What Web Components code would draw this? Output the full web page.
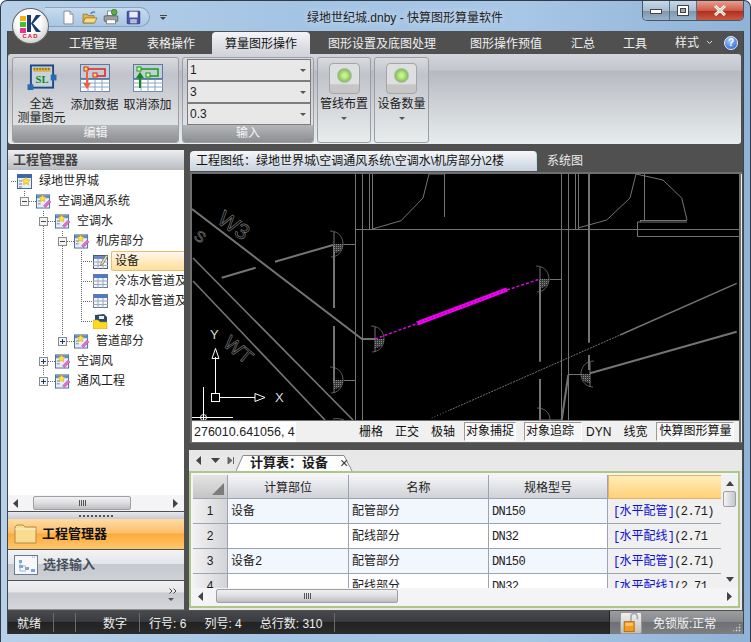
<!DOCTYPE html>
<html lang="zh">
<head>
<meta charset="utf-8">
<title>快算图形算量软件</title>
<style>
  html, body { margin: 0; padding: 0; overflow: hidden; }
  body { font: 12px "Liberation Sans", "Noto Sans CJK SC", sans-serif; color: #1c1c1c; }
</style>
</head>
<body>
<app-window></app-window>
<script>
// small svg icons, all in one place
const icons = {
  doc: `<svg width="13" height="15" viewBox="0 0 17 20"><path d="M2.500 1.500h8l4 4v13h-12z" fill="#fdfdfd" stroke="#777"/><path d="M10.500 1.500v4h4" fill="#dfe6f0" stroke="#777"/></svg>`,
  open: `<svg width="16" height="15" viewBox="0 0 22 20"><path d="M1.500 17.500v-12h6l1 2h8v10z" fill="#e2b64f" stroke="#8a6a20"/><path d="M1.500 17.500l3-7h16l-3 7z" fill="#f8dc84" stroke="#8a6a20"/><path d="M12 5c2-3 4-3 6-2" fill="none" stroke="#5a7fa8" stroke-width="2"/></svg>`,
  print: `<svg width="16" height="16" viewBox="0 0 20 20"><rect x="5.500" y="2.500" width="9" height="6" fill="#fff" stroke="#777"/><rect x="1.500" y="8.500" width="17" height="7" rx="1" fill="#9a9fa8" stroke="#555"/><rect x="4.500" y="13.500" width="11" height="5" fill="#fff" stroke="#777"/><circle cx="14" cy="4" r="3.500" fill="#5cb040" stroke="#2c7a1c"/></svg>`,
  save: `<svg width="15" height="15" viewBox="0 0 18 18"><rect x="1.500" y="1.500" width="15" height="15" rx="1" fill="#4a55b8" stroke="#2a3070"/><rect x="4" y="2" width="10" height="7" fill="#e8ecf4"/><rect x="5" y="11" width="8" height="5" fill="#b8bcd0"/></svg>`,
  measure: `<svg width="30" height="28" viewBox="0 0 30 28"><rect x="3.500" y="1.500" width="23" height="23" fill="#c8d2da" stroke="#1c4a86" stroke-width="2"/><rect x="6" y="4" width="18" height="4" fill="#d8b040"/><path d="M7 4v2M10 4v2M13 4v2M16 4v2M19 4v2M22 4v2" stroke="#6a4a10"/><text x="15" y="20" text-anchor="middle" font-family="Liberation Serif" font-weight="700" font-size="11" fill="#0a8a20">SL</text><rect x="0" y="21" width="6" height="6" fill="#2a6ab0"/><rect x="24" y="11" width="6" height="6" fill="#2a6ab0"/></svg>`,
  addData: `<svg width="30" height="28" viewBox="0 0 30 28"><rect x=".5" y=".5" width="29" height="14" fill="#c4ced8" stroke="#5a7aa0"/><path d="M6 5h19v7h-9" fill="none" stroke="#e02020" stroke-width="1.500"/><rect x="4" y="3" width="4" height="4" fill="#ffe060" stroke="#e02020"/><rect x="13" y="9" width="4" height="4" fill="#ffe060" stroke="#e02020"/><rect x=".5" y="15.500" width="29" height="12" fill="#fff" stroke="#6a8ab0"/><path d="M0 19h30M0 23h30M8 16v12M15 16v12M22 16v12" stroke="#8aa4c4"/><path d="M7 8v12" stroke="#f06040" stroke-width="2"/><path d="M3 19h8l-4 6z" fill="#f06040"/></svg>`,
  cancelData: `<svg width="30" height="28" viewBox="0 0 30 28"><rect x=".5" y=".5" width="29" height="14" fill="#c4ced8" stroke="#5a7aa0"/><path d="M6 5h19v7h-9" fill="none" stroke="#10a010" stroke-width="1.500"/><rect x="4" y="3" width="4" height="4" fill="#e8ffb0" stroke="#10a010"/><rect x="13" y="9" width="4" height="4" fill="#e8ffb0" stroke="#10a010"/><rect x=".5" y="15.500" width="29" height="12" fill="#fff" stroke="#6a8ab0"/><path d="M0 19h30M0 23h30M8 16v12M15 16v12M22 16v12" stroke="#8aa4c4"/><path d="M7 12v12" stroke="#108a10" stroke-width="2"/><path d="M3 14h8l-4-6z" fill="#108a10"/></svg>`,
  node: `<svg width="15" height="16" viewBox="0 0 16 16"><rect x=".5" y="1.500" width="14" height="14" fill="#e8eef6" stroke="#4a6a94"/><rect x="1" y="2" width="13" height="3" fill="#5a8ad0"/><path d="M2 8h3M2 11h3" stroke="#6a7a90"/><path d="M7 1l1.200 2.500 2.800.4-2 2 .5 2.800L7 7.400 4.500 8.700 5 5.900l-2-2 2.800-.4z" fill="#ffe040" stroke="#c09a10" stroke-width=".5"/><path d="M8 13l6-6 2 2-6 6z" fill="#e070d0" stroke="#a040a0" stroke-width=".5"/></svg>`,
  root: `<svg width="15" height="15" viewBox="0 0 15 15"><rect x=".5" y=".5" width="14" height="14" fill="#e8eef6" stroke="#4a6a94"/><rect x="1" y="1" width="13" height="3" fill="#3a66b0"/><path d="M2 7h3M2 10h3M2 13h3" stroke="#6a7a90"/><path d="M9 3l1.200 2.500 2.800.4-2 2 .5 2.800L9 9.400 6.500 10.700 7 7.900l-2-2 2.800-.4z" fill="#ffe040" stroke="#c09a10" stroke-width=".5"/></svg>`,
  table: `<svg width="15" height="14" viewBox="0 0 15 14"><rect x=".5" y=".5" width="14" height="13" fill="#f4f6fa" stroke="#6a7a94"/><rect x="1" y="1" width="13" height="3" fill="#4a7ac8"/><path d="M0 7h15M0 10.500h15M5 4v10M10 4v10" stroke="#9aa8bc"/></svg>`,
  tableEdit: `<svg width="15" height="15" viewBox="0 0 15 15"><rect x=".5" y="1.500" width="14" height="13" fill="#f4f6fa" stroke="#4a5a74"/><rect x="1" y="2" width="13" height="3" fill="#6a8ac8"/><path d="M0 8h15M0 11.500h15M5 5v10M10 5v10" stroke="#9aa8bc"/><path d="M8 9l5-8 2 1-5 8-2.500 1.500z" fill="#f4e8a0" stroke="#555" stroke-width=".6"/></svg>`,
  floor: `<svg width="15" height="15" viewBox="0 0 15 15"><path d="M2 1l9-1 3 3v8H2z" fill="#2c4a6a"/><rect x="6" y="2" width="5" height="3" fill="#e8eef4"/><path d="M0 6h5l2 2h7v7H0z" fill="#ffd820" stroke="#b89a10" stroke-width=".5"/></svg>`,
  folder: `<svg width="23" height="20" viewBox="0 0 23 20"><path d="M1 19V3l2-2h6l2 2h11v16z" fill="#f8dc90" stroke="#b08c48"/><path d="M1 5h21" stroke="#fff0c0"/></svg>`,
  pick: `<svg width="24" height="20" viewBox="0 0 24 20"><rect x=".5" y=".5" width="23" height="19" fill="#f6f8fb" stroke="#6a7a90"/><path d="M18 2h4" stroke="#8a96a8" stroke-dasharray="1 1"/><rect x="5" y="5" width="3" height="3" fill="#7aa6d8"/><rect x="5" y="10" width="4" height="3" fill="#7aa6d8"/><rect x="11" y="12" width="4" height="3" fill="#7aa6d8"/><rect x="17" y="14" width="4" height="3" fill="#7aa6d8"/><path d="M6 8v8h6M9 11h3" stroke="#a0b4cc" fill="none"/></svg>`,
  lock: `<svg width="16" height="20" viewBox="0 0 16 22"><path d="M8 9V4a3.500 3.500 0 0 1 7 0v3" fill="none" stroke="#a8adb4" stroke-width="2"/><rect x=".5" y="9.500" width="11" height="11" fill="#f59a20" stroke="#b06a10"/><rect x="2" y="11" width="8" height="3" fill="#ffc870"/></svg>`
};
const arrow = d => `<svg width="7" height="9" viewBox="0 0 7 9"><path d="${d}" fill="#444"/></svg>`;

// base: fills an open shadow root from a static html string
class Part extends HTMLElement {
  constructor() {
    super();
    this.attachShadow({ mode: 'open' });
  }
  connectedCallback() {
    this.shadowRoot.innerHTML = this.markup();
  }
  attr(name, dflt = '') {
    return this.hasAttribute(name) ? this.getAttribute(name) : dflt;
  }
}

class TitleBar extends Part {
  markup() {
    return `<style>
      :host { display: flex; align-items: flex-start; height: 30px; flex: none; position: relative; color: #222; }
      #logo { position: absolute; left: 11px; top: 7px; width: 37px; height: 36px; border-radius: 50%; z-index: 3; box-sizing: border-box;
        border: 1px solid #666; background: radial-gradient(circle at 45% 35%, #fff 40%, #c8c8c8 85%, #8a8a8a); }
      #logo i { position: absolute; left: 7px; width: 6px; height: 5px; }
      #logo svg { position: absolute; left: 14px; top: 6px; }
      #logo b { position: absolute; left: 0; right: 0; top: 24px; text-align: center; font: 700 6px/7px "Liberation Sans", sans-serif; letter-spacing: 1px; color: #d01030; }
      #qat { display: flex; align-items: center; margin: 6px 0 0 44px; padding-left: 17px; width: 105px; height: 20px; box-sizing: border-box;
        border: 1px solid #8aa2bc; border-left: 0; border-radius: 0 10px 10px 0; background: linear-gradient(#c6dbee, #a9c6e2); }
      #qat svg { display: block; flex: none; }
      #more { margin: 14px 0 0 10px; width: 7px; }
      #more u { display: block; height: 1px; background: #444; margin-bottom: 1px; }
      #more s { display: block; border: 3px solid transparent; border-top-color: #444; border-bottom: 0; margin-left: 0; width: 0; }
      #caption { position: absolute; left: 306px; top: 9px; line-height: 17px; white-space: nowrap; text-shadow: 0 0 6px #dfeaf5; }
      #btns { margin-left: auto; margin-right: 6px; display: flex; height: 19px; border: 1px solid #44566a; border-top: 0; border-radius: 0 0 5px 5px; overflow: hidden; }
      #btns span { display: flex; align-items: center; justify-content: center; width: 26px; background: linear-gradient(#c8d8e8 0, #a8bcd0 50%, #7e94ac 52%, #9ab2c8); border-right: 1px solid #5a6e84; }
      #btns span:last-child { width: 46px; border: 0; background: linear-gradient(#e8a090 0, #cf5a48 50%, #b02c1c 52%, #c85a40); }
    </style>
    <div id="logo"><i style="top:7px;background:#f0b010"></i><i style="top:13px;background:#40c030"></i><i style="top:19px;background:#f03090"></i>
      <svg width="15" height="17" viewBox="0 0 15 17"><path d="M0 0h4v17H0z" fill="#1c3a70"/><path d="M14 0L6 8.500 14 17H9L4 8.500 9 0z" fill="#1c3a70"/></svg><b>CAD</b></div>
    <div id="qat">${icons.doc}<span style="width:7px"></span>${icons.open}<span style="width:5px"></span>${icons.print}<span style="width:7px"></span>${icons.save}</div>
    <div id="more"><u></u><s></s></div>
    <div id="caption">绿地世纪城.dnby - 快算图形算量软件</div>
    <div id="btns">
      <span><svg width="12" height="6"><rect x=".5" y="1.500" width="11" height="4" fill="#fff" stroke="#444"/></svg></span>
      <span><svg width="12" height="11"><rect x=".5" y=".5" width="11" height="10" fill="#fff" stroke="#444"/><rect x="3.500" y="3.500" width="5" height="4" fill="#9ab" stroke="#444"/></svg></span>
      <span><svg width="14" height="11" viewBox="0 0 14 11"><path d="M2 1l10 9M12 1L2 10" stroke="#fff" stroke-width="3"/><path d="M2 1l10 9M12 1L2 10" stroke="#553" stroke-width="1" opacity=".4"/></svg></span>
    </div>`;
  }
}

class RibbonTabs extends Part {
  markup() {
    return `<style>
      :host { display: flex; height: 23px; flex: none; align-items: flex-end; color: #f0f0f0; position: relative; box-sizing: border-box; padding-left: 61px; }
      span { height: 22px; line-height: 25px; white-space: nowrap; }
      .on { color: #111; width: 98px; text-align: center; border-radius: 4px 4px 0 0; background: linear-gradient(#f2f4f7, #d2d4da); }
      #help { display: flex; align-items: center; margin-left: auto; margin-right: 5px; gap: 7px; height: 23px; align-self: flex-end; }
      #help span { height: 20px; line-height: 20px; }
      #help b { width: 14px; height: 14px; border-radius: 50%; background: radial-gradient(circle at 40% 30%, #a0ccff, #1a5ad0); border: 1px solid #e8f0ff; box-sizing: border-box;
        color: #fff; font: 700 10px/12px "Liberation Sans", sans-serif; text-align: center; margin-left: 4px; }
    </style>
    <span>工程管理</span><span style="margin-left:30px">表格操作</span>
    <span class="on" style="margin-left:17px">算量图形操作</span>
    <span style="margin-left:18px">图形设置及底图处理</span>
    <span style="margin-left:34px">图形操作预值</span>
    <span style="margin-left:29px">汇总</span>
    <span style="margin-left:28px">工具</span>
    <div id="help"><span>样式</span><svg width="7" height="5"><path d="M1 1l2.500 2.500L6 1" fill="none" stroke="#ddd"/></svg><b>?</b></div>`;
  }
}

class RibbonBar extends Part {
  markup() {
    return `<style>
      :host { display: flex; height: 90px; flex: none; box-sizing: border-box; margin: 0 2px 0 0; padding: 3px 0 1px 4px; gap: 3px; border-radius: 3px;
        background: linear-gradient(#d2d5db 0, #c4c6ce 18%, #b6b9c2 19%, #d4d7da 65%, #e6eded 100%); }
    </style><slot></slot>`;
  }
}

class RibbonGroup extends Part {
  markup() {
    const label = this.attr('label');
    return `<style>
      :host { display: flex; flex-direction: column; box-sizing: border-box; height: 86px; border: 1px solid #9c9ea6; border-radius: 3px; overflow: hidden;
        background: linear-gradient(#d8dade 0, #c0c3cb 20%, #d6d8dc 60%, #e8ecec 100%); width: ${this.attr('w')}px; }
      #body { flex: 1; min-height: 0; display: flex; padding-left: ${this.attr('pad', 0)}px; }
      #foot { height: 17px; line-height: 16px; flex: none; text-align: center; color: #f4f4f4; background: linear-gradient(#b4b6ba, #8c8e92); }
    </style><div id="body"><slot></slot></div>${label ? `<div id="foot">${label}</div>` : ''}`;
  }
}

class RibbonButton extends Part {
  markup() {
    return `<style>
      :host { display: flex; flex-direction: column; align-items: center; width: ${this.attr('w', 53)}px; padding-top: 6px; box-sizing: border-box; }
      svg { display: block; margin-bottom: 6px; }
      div { line-height: 14px; text-align: center; white-space: nowrap; }
    </style>${icons[this.attr('icon')]}<div><slot></slot></div>`;
  }
}

class RibbonCombo extends Part {
  markup() {
    return `<style>
      :host { display: flex; align-items: center; justify-content: space-between; box-sizing: border-box; width: 124px; height: 22px; padding: 0 4px 0 2px;
        background: #e8e8e8; border: 1px solid #7c7c7c; }
      i { border: 3px solid transparent; border-top-color: #555; border-bottom: 0; }
    </style><slot></slot><i></i>`;
  }
}

class OrbButton extends Part {
  markup() {
    return `<style>
      :host { display: flex; flex-direction: column; align-items: center; flex: 1; padding-top: 5px; }
      #pad { width: 31px; height: 31px; box-sizing: border-box; border: 1px solid #a4a4a4; border-radius: 4px; background: linear-gradient(#dedfe0 70%, #c6c6c6 71%); display: flex; justify-content: center; padding-top: 4px; margin-bottom: 3px; }
      #pad i { width: 13px; height: 13px; border-radius: 50%; border: 1px solid #b0b8b8; background: radial-gradient(circle, #c8f090 20%, #80c050 70%, #c0d0c0); }
      div { line-height: 14px; white-space: nowrap; }
      s { margin-top: 6px; border: 3px solid transparent; border-top-color: #555; border-bottom: 0; }
    </style><div id="pad"><i></i></div><div><slot></slot></div><s></s>`;
  }
}

class ScrollBar extends Part {
  markup() {
    const v = this.hasAttribute('vertical');
    const flip = [`M5 0v9L0 4.500z`, `M1 0v9l5-4.500z`];
    const start = +this.attr('start'), size = +this.attr('size');
    if (v) return `<style>
      :host { display: flex; flex-direction: column; align-items: center; width: 17px; flex: none; background: #f0f0f2; box-sizing: border-box; position: relative; }
      i { display: block; border: 4px solid transparent; }
      #a { border-top: 0; border-bottom: 5px solid #444; margin-top: 6px; } #b { border-bottom: 0; border-top: 5px solid #444; margin-top: auto; margin-bottom: 6px; }
      #t { width: 13px; height: ${size}px; margin-top: ${start}px; box-sizing: border-box; border: 1px solid #a0a0a4; border-radius: 2px; background: linear-gradient(90deg, #f4f4f6, #c4c6ca); }
    </style><i id="a"></i><div id="t"></div><i id="b"></i>`;
    return `<style>
      :host { display: flex; align-items: center; height: 16px; flex: none; background: #f4f4f6; box-sizing: border-box; padding: 0 5px; }
      svg { flex: none; display: block; }
      #t { height: 14px; width: ${size}px; margin-left: ${start}px; box-sizing: border-box; border: 1px solid #a0a0a4; border-radius: 2px; background: linear-gradient(#f0f0f2, #e0e0e2 45%, #bcbec2); display: flex; align-items: center; justify-content: center; }
      #t u { width: 7px; height: 6px; background: repeating-linear-gradient(90deg, #555 0 1px, transparent 1px 2px); }
      #end { margin-left: auto; }
    </style>${arrow(flip[0])}<div id="t"><u></u></div><div id="end">${arrow(flip[1])}</div>`;
  }
}

class TreeNode extends Part {
  markup() {
    const level = +this.attr('level', 0);
    const exp = this.attr('exp');
    const box = exp ? `<svg width="9" height="9" style="flex:none"><rect x=".5" y=".5" width="8" height="8" fill="#f4f4f4" stroke="#8a8a8a"/><path d="M2 4.500h5${exp === 'plus' ? 'M4.500 2v5' : ''}" stroke="${exp === 'plus' ? '#1c3a70' : '#444'}"/></svg>` : '<span style="width:9px;flex:none"></span>';
    const lead = level > 0 ? `<span style="width:${19 * level - 7}px;flex:none"></span>${box}<span style="width:7px;flex:none"></span>` : '<span style="width:9px;flex:none"></span>';
    return `<style>
      :host { display: flex; align-items: center; height: 20px; white-space: nowrap; overflow: hidden; position: relative; }
      svg { display: block; flex: none; }
      #t { margin-left: 7px; line-height: 18px; padding: 0 30px 0 0; }
      :host([selected]) #t { margin-left: 3px; padding-left: 3px; flex: 1; border: 1px solid #e2c070; border-right: 0; border-radius: 2px 0 0 2px; background: linear-gradient(#fff6ec, #ffdf98); }
    </style>${lead}${icons[this.attr('icon', 'node')]}<div id="t"><slot></slot></div>`;
  }
}

class TreeView extends Part {
  markup() {
    const h = [[11,181,17],[29,201,36],[48,221,55],[67,241,75],[81,261,93],[81,281,93],[81,301,93],[81,321,93],[67,341,75],[48,361,55],[48,381,55]];
    const v = [[24.5,191,196],[43.5,211,216],[43.5,226,356],[43.5,366,376],[62.5,231,236],[62.5,246,336],[81.5,251,321]];
    const lines = h.map(l => `M${l[0]} ${l[1] + .5}H${l[2]}`).concat(v.map(l => `M${l[0]} ${l[1]}V${l[2]}`)).join('');
    return `<style>
      :host { display: block; flex: none; height: 325px; box-sizing: border-box; background: #fff; position: relative; padding-top: 1px; overflow: hidden; }
      svg#wires { position: absolute; left: 0; top: 0; }
    </style><svg id="wires" width="176" height="325" viewBox="8 170 176 325"><path d="${lines}" stroke="#666" stroke-dasharray="1 1" fill="none"/></svg><slot></slot>`;
  }
}

class NavButton extends Part {
  markup() {
    return `<style>
      :host { display: flex; align-items: center; gap: 5px; height: 31px; flex: none; padding-left: 6px; box-sizing: border-box; font-size: 13px; font-weight: 700; color: #47505c;
        background: linear-gradient(#f2f3f5 0, #e4e6e9 45%, #c6c9cf 46%, #cdd0d5 100%); border-bottom: 1px solid #505050; }
      :host([active]) { color: #111; background: linear-gradient(#fedba4 0, #fdc070 45%, #fdab3c 50%, #fec66c 100%); }
      svg { display: block; flex: none; }
      span { line-height: 28px; }
    </style>${icons[this.attr('icon')]}<span><slot></slot></span>`;
  }
}

class ProjectPanel extends Part {
  markup() {
    return `<style>
      :host { display: flex; flex-direction: column; width: 176px; flex: none; background: #505050; }
      h3 { margin: 0; height: 20px; flex: none; line-height: 20px; padding-left: 5px; font-size: 13px; font-weight: 700; color: #444; background: linear-gradient(#eceef1, #b8bbc0); }
      #sash { height: 7px; flex: none; margin-top: 1px; background: linear-gradient(#e8eaee, #c8cad0); display: flex; justify-content: center; align-items: center; }
      #sash i { width: 34px; height: 2px; background: repeating-linear-gradient(90deg, #555 0 2px, transparent 2px 4px); }
      #foot { flex: 1; background: linear-gradient(#f0f0f2 0, #e8e8ea 40%, #c8cacf 42%, #d4d6da); display: flex; flex-direction: column; align-items: flex-end; padding: 7px 7px 0 0; box-sizing: border-box; border-bottom: 1px solid #909090; }
      #foot s { margin: 4px 3px 0 0; border: 3px solid transparent; border-top-color: #555; border-bottom: 0; }
      #foot svg { display: block; }
    </style>
    <h3>工程管理器</h3>
    <tree-view>
      <tree-node icon="root">绿地世界城</tree-node>
      <tree-node level="1" exp="minus">空调通风系统</tree-node>
      <tree-node level="2" exp="minus">空调水</tree-node>
      <tree-node level="3" exp="minus">机房部分</tree-node>
      <tree-node level="4" icon="tableEdit" selected>设备</tree-node>
      <tree-node level="4" icon="table">冷冻水管道及</tree-node>
      <tree-node level="4" icon="table">冷却水管道及</tree-node>
      <tree-node level="4" icon="floor">2楼</tree-node>
      <tree-node level="3" exp="plus">管道部分</tree-node>
      <tree-node level="2" exp="plus">空调风</tree-node>
      <tree-node level="2" exp="plus">通风工程</tree-node>
    </tree-view>
    <scroll-bar start="13" size="98"></scroll-bar>
    <div id="sash"><i></i></div>
    <nav-button icon="folder" active>工程管理器</nav-button>
    <nav-button icon="pick">选择输入</nav-button>
    <div id="foot"><svg width="8" height="6"><path d="M.5 .5l2.500 2.500L.5 5.500M4.500 .5l2.500 2.500-2.500 2.500" fill="none" stroke="#444"/></svg><s></s></div>`;
  }
}

// the drawing itself: coordinates are page pixels, so the lines read off the reference directly
class CadCanvas extends Part {
  door(x, y, flip) {
    // leaf, arc and hatched wedge of a door symbol; x,y = hinge
    const f = flip ? -1 : 1;
    return `<g transform="translate(${x} ${y}) scale(${f} 1)">
      <path d="M0 -12V13" stroke-width="1"/>
      <path d="M-4 -13C6 -13 9 -5 9 0C9 7 4 13 -3 13" stroke-width=".8"/>
      <path d="M0 0H9C9 6 5 9 0 9z" fill="url(#hatch)" stroke="none"/></g>`;
  }
  markup() {
    return `<style>
      :host { display: block; height: 246px; flex: none; background: #000; overflow: hidden; }
      svg { display: block; }
      text { font-family: "Liberation Sans", sans-serif; }
    </style>
    <svg width="547" height="246" viewBox="192 174 547 246">
      <defs><pattern id="hatch" width="2" height="2" patternUnits="userSpaceOnUse"><rect width="2" height="2" fill="#3a3a3a"/><rect width="1" height="1" fill="#8a8a8a"/></pattern></defs>
      <g fill="none" stroke="#747474" stroke-width="1">
        <path d="M355.500 174V420M362.500 174V420M369.500 174V229M372.500 174V229M444.500 174V217"/>
        <path d="M561.500 174V420M568.500 174V420M575.500 174V229M578.500 174V229M644.500 174V220"/>
        <path d="M355 229.500H739M637.500 222V236.500H739M637.500 222H687M640.500 220V222M640 220.500H687"/>
        <path d="M372.500 229L401 220.700 423 198 429 174H444"/>
        <path d="M578 228L606.700 220 630 198 636 174 663 180 681.700 198 687 220"/>
        <g stroke-width="2">
          <path d="M192 209L362 339H375"/>
          <path d="M275 261.700L333 245M221.700 277.700L255.700 267.700"/>
          <path d="M334 245V308M334 326V383"/>
          <path d="M540 280V361.700M540 379V420"/>
          <path d="M589 174V342.700M589 355V370"/>
          <path d="M590 373.300L736.700 331.700"/>
          <path d="M561.700 420L568.300 375"/>
        </g>
        <path d="M193 258L353 420M193 281L325 420" stroke-width="1.600"/>
        <path d="M540 420H561M343.700 244.500H355M344 380.500H355M550 279.500H561M568 374.500H581"/>
        <path d="M537 408c7 0 13 4 13 12M333 419c4-1 9 0 11 1" stroke-width=".8"/>
        <path d="M450 410L620 335" stroke-dasharray="2 1"/><path d="M431.700 418L450 410" stroke-dasharray="1 2"/>
        <path d="M620 335L736.700 283.300" stroke-width="1.400"/>
        ${this.door(334, 244)}${this.door(375, 339)}${this.door(334, 380)}${this.door(540, 279)}${this.door(590, 374, true)}
        <text transform="translate(216 222) rotate(35)" font-size="22" stroke-width=".7">W3</text>
        <text transform="translate(193 238) rotate(35)" font-size="15" stroke-width=".7">S</text>
        <text transform="translate(222 345) rotate(40)" font-size="20" stroke-width=".7">WT</text>
      </g>
      <path d="M375 339L416 324" stroke="#e000e0" stroke-width="1.500" stroke-dasharray="3 2" fill="none"/>
      <path d="M417 323.500L507 289.500" stroke="#f000f0" stroke-width="4.500" fill="none"/>
      <path d="M417 323.500L507 289.500" stroke="#000" stroke-width="1" stroke-dasharray="1 3" fill="none" opacity=".7"/>
      <path d="M507 290L540 279" stroke="#e000e0" stroke-width="1.500" stroke-dasharray="3 2" fill="none"/>
      <g fill="none" stroke="#fff" stroke-width="1">
        <path d="M215.500 393V357M219 397.500H255"/>
        <path d="M215.500 348.500L219 358.500H212z"/>
        <path d="M255 393.500L265 397.500 255 401.500z"/>
        <rect x="211.500" y="393.500" width="8" height="8"/>
        <path d="M203.500 387V420M192 417.500H233"/>
        <circle cx="203.500" cy="417.500" r="3"/>
      </g>
      <text x="275" y="402" font-size="13" fill="#ddd">X</text>
      <text x="210" y="339" font-size="13" fill="#ddd">Y</text>
    </svg>`;
  }
}

class CadStatus extends Part {
  markup() {
    return `<style>
      :host { display: flex; align-items: center; height: 21px; flex: none; background: #f0f0f0; position: relative; white-space: nowrap; }
      #c { width: 104px; height: 20px; line-height: 20px; background: #fff; overflow: hidden; padding-left: 2px; box-sizing: border-box; margin-right: 63px; flex: none; font-size: 12.500px; color: #222; }
      span { flex: none; line-height: 20px; }
      .p { box-sizing: border-box; border: 1px solid; border-color: #999 #fff #fff #999; height: 19px; line-height: 17px; padding: 0 1px; background: #f6f6f6; }
    </style>
    <div id="c">276010.641056, 4</div>
    <span>栅格</span><span style="margin-left:12px">正交</span><span style="margin-left:12px">极轴</span>
    <span class="p" style="margin-left:9px;width:52px">对象捕捉</span>
    <span class="p" style="margin-left:8px;width:58px">对象追踪</span>
    <span style="margin-left:4px">DYN</span><span style="margin-left:12px">线宽</span>
    <span class="p" style="margin-left:9px;width:78px;padding-left:2px">快算图形算量</span>`;
  }
}

class DrawingPane extends Part {
  markup() {
    return `<style>
      :host { display: flex; flex-direction: column; height: 293px; flex: none; color: #111; }
      #tabs { display: flex; height: 22px; flex: none; margin-left: 1px; }
      #on { width: 347px; height: 20px; margin-top: 1px; line-height: 20px; box-sizing: border-box; padding-left: 6px; white-space: nowrap; border-radius: 4px 4px 0 0; background: linear-gradient(#f6f7f9, #c6d2de); border-right: 1px solid #b4e0ec; }
      #off { color: #ececec; margin-left: 10px; line-height: 22px; }
      #frame { margin-left: 1px; border: 2px solid #6f6f6f; border-right: 0; border-bottom-width: 1px; width: 552px; box-sizing: border-box; background: #f0f0f0; height: 271px; }
      #in { width: 547px; border-right: 2px solid #6f6f6f; }
      #rule { height: 1px; background: #6f6f6f; }
    </style>
    <div id="tabs"><div id="on">工程图纸：绿地世界城\\空调通风系统\\空调水\\机房部分\\2楼</div><div id="off">系统图</div></div>
    <div id="frame"><div id="in"><cad-canvas></cad-canvas><div id="rule"></div><cad-status></cad-status></div></div>`;
  }
}

class CalcGrid extends Part {
  markup() {
    const link = (t, rest) => `<span class="l">[</span><span class="c">${t}</span><span class="l">]</span><span class="m">(2.71${rest}</span>`;
    const m = t => `<span class="m">${t}</span>`;
    const row = (n, a, b, c, d, odd) => `
      <div class="n">${n}</div><div class="d ${odd ? 'o' : ''}">${a}</div><div class="d ${odd ? 'o' : ''}">${b}</div><div class="d ${odd ? 'o' : ''}">${c}</div><div class="d e">${d}</div>`;
    return `<style>
      :host { display: flex; flex-direction: column; flex: 1; min-height: 0; background: #f0f0f0; }
      #top { display: flex; height: 113px; flex: none; }
      #g { flex: 1; min-width: 0; display: grid; grid-template-columns: 35px 121px 140px 119px 113px; grid-template-rows: 24px repeat(4, 25px); overflow: hidden; background: #fff; }
      #g > div { box-sizing: border-box; border-right: 1px solid #9aa4b4; border-bottom: 1px solid #9aa4b4; padding: 0 3px; white-space: nowrap; overflow: hidden; line-height: 25px; }
      #g > .h { text-align: center; line-height: 26px; background: linear-gradient(#f6f6f8, #d0d2d8); }
      #g > .x { background: linear-gradient(#ffeeb8, #ffd078); border: 1px solid #e8b060; border-width: 1px 0 1px 1px; }
      #g > .k { background: linear-gradient(#e4e4e4, #c4c4c4); position: relative; }
      .k svg { position: absolute; right: 3px; bottom: 3px; display: block; }
      #g > .n { text-align: center; background: linear-gradient(90deg, #f2f2f4, #d4d4d8); padding: 0; }
      #g > .o { background: #f2f6fd; }
      #g > .e { background: #f0f0f0; padding-left: 5px; border-right: 0; }
      .m { font: 12px "Liberation Mono", monospace; letter-spacing: -.6px; }
      .l { font: 12px "Liberation Mono", monospace; letter-spacing: -.6px; color: #1010d0; }
      .c { color: #1010d0; }
    </style>
    <div id="top">
      <div id="g">
        <div class="h k"><svg width="12" height="12"><path d="M12 0v12H0z" fill="#7c7c7c"/></svg></div>
        <div class="h">计算部位</div><div class="h">名称</div><div class="h">规格型号</div><div class="h x"></div>
        ${row(1, '设备', '配管部分', m('DN150'), link('水平配管', ')'), true)}
        ${row(2, '', '配线部分', m('DN32'), link('水平配线', ''), false)}
        ${row(3, '设备' + m('2'), '配管部分', m('DN150'), link('水平配管', ')'), true)}
        ${row(4, '', '配线部分', m('DN32'), link('水平配线', ''), false)}
      </div>
      <scroll-bar vertical start="5" size="16"></scroll-bar>
    </div>
    <scroll-bar start="11" size="182"></scroll-bar>`;
  }
}

class CalcPane extends Part {
  markup() {
    return `<style>
      :host { display: flex; flex-direction: column; height: 160px; flex: none; margin-top: 7px; background: #e8e8e8; width: 553px; }
      #strip { display: flex; align-items: center; height: 21px; flex: none; padding-left: 6px; box-sizing: border-box; }
      #strip svg { display: block; flex: none; }
      #tab { position: relative; margin-left: 8px; height: 16px; align-self: flex-end; width: 110px; line-height: 16px; padding-left: 6px; box-sizing: border-box; font-weight: 700; font-size: 13px; white-space: nowrap; }
      #tab svg { position: absolute; left: -8px; top: 0; z-index: 0; width: 126px; height: 16px; }
      #tab span { position: relative; }
      #frame { flex: 1; min-height: 0; margin-bottom: 2px; display: flex; border: 2px solid #aec68c; background: #f4f4f4; padding: 2px; width: 551px; box-sizing: border-box; }
    </style>
    <div id="strip">
      <svg width="9" height="11" viewBox="0 0 9 11"><path d="M6 1v9L1 5.500z" fill="#444"/></svg>
      <svg width="12" height="11" viewBox="0 0 12 11" style="margin-left:6px"><path d="M1 3h9l-4.500 5z" fill="#444"/></svg>
      <svg width="9" height="11" viewBox="0 0 9 11" style="margin-left:5px"><path d="M1 2v7l4-3.500zM6.500 2v7" fill="#666" stroke="#666"/></svg>
      <div id="tab"><svg viewBox="0 0 126 16"><path d="M0 16L7 .5H108L116 16" fill="#fdfdfd" stroke="#8a8a8a"/></svg><span>计算表：设备</span>
        <span style="position:absolute;left:96px;top:0;font:400 14px/16px 'Liberation Sans',sans-serif;color:#333">×</span></div>
    </div>
    <div id="frame"><calc-grid></calc-grid></div>`;
  }
}

class StatusBar extends Part {
  markup() {
    return `<style>
      :host { display: flex; align-items: center; height: 23px; flex: none; color: #eee; white-space: nowrap; margin-top: 1px;
        background: linear-gradient(#46484c 0, #3a3c40 45%, #222 50%, #2c2c2c 100%); }
      i { width: 1px; height: 19px; background: #6a6a6a; flex: none; }
      #r { margin-left: auto; width: 134px; height: 23px; display: flex; align-items: center; box-sizing: border-box; padding-left: 10px; color: #f4f4f4;
        background: linear-gradient(#9a9ca0 0, #888a8e 45%, #6e7074 50%, #7c7e82 100%); border-left: 1px solid #222; position: relative; }
      #lk { width: 22px; height: 22px; display: flex; align-items: center; justify-content: center; flex: none; background: linear-gradient(#f0f0f0, #c0c0c0); box-sizing: border-box; border: 1px solid #999; border-radius: 2px; margin-right: 11px; }
      #lk svg { display: block; }
      #grip { position: absolute; right: 2px; bottom: 2px; width: 9px; height: 9px; background: radial-gradient(circle, #e0e0e0 40%, transparent 50%) 0 0/3px 3px; clip-path: polygon(100% 0, 100% 100%, 0 100%); }
    </style>
    <span style="margin-left:9px">就绪</span><i style="margin-left:12px"></i><i style="margin-left:21px"></i>
    <span style="margin-left:27px">数字</span><i style="margin-left:12px"></i>
    <span style="margin-left:9px">行号: 6</span><span style="margin-left:18px">列号: 4</span><span style="margin-left:18px">总行数: 310</span><i style="margin-left:12px"></i>
    <div id="r"><div id="lk">${icons.lock}</div><span>免锁版:正常</span><div id="grip"></div></div>`;
  }
}

class AppWindow extends Part {
  markup() {
    return `<style>
      :host { display: block; width: 751px; height: 642px; box-sizing: border-box; position: relative; overflow: hidden; border-radius: 7px 7px 0 0; border: 1px solid #2e3c4c; border-bottom: 0;
        background: linear-gradient(90deg, #b8d0e8 0, #a4c4e4 40%, #a8c6e6 70%, #8fb2d6 100%); }
      #shell { display: flex; flex-direction: column; height: 603px; margin: 0 6px; background: #505050; border: 1px solid #3c4650; border-top: 0; border-bottom: 0; box-sizing: border-box; }
      #main { display: flex; gap: 5px; flex: none; height: 460px; margin-top: 6px; }
      #right { display: flex; flex-direction: column; flex: 1; min-width: 0; }
    </style>
    <title-bar></title-bar>
    <div id="shell">
      <ribbon-tabs></ribbon-tabs>
      <ribbon-bar>
        <ribbon-group w="167" pad="2" label="编辑">
          <ribbon-button icon="measure">全选<br>测量图元</ribbon-button>
          <ribbon-button icon="addData">添加数据</ribbon-button>
          <ribbon-button icon="cancelData">取消添加</ribbon-button>
        </ribbon-group>
        <ribbon-group w="132" label="输入">
          <div style="display:flex;flex-direction:column;padding:1px 0 0 4px">
            <ribbon-combo>1</ribbon-combo><ribbon-combo>3</ribbon-combo><ribbon-combo>0.3</ribbon-combo>
          </div>
        </ribbon-group>
        <ribbon-group w="54"><orb-button>管线布置</orb-button></ribbon-group>
        <ribbon-group w="55"><orb-button>设备数量</orb-button></ribbon-group>
      </ribbon-bar>
      <div id="main">
        <project-panel></project-panel>
        <div id="right"><drawing-pane></drawing-pane><calc-pane></calc-pane></div>
      </div>
      <status-bar></status-bar>
    </div>`;
  }
}

const parts = { 'title-bar': TitleBar, 'ribbon-tabs': RibbonTabs, 'ribbon-bar': RibbonBar, 'ribbon-group': RibbonGroup, 'ribbon-button': RibbonButton,
  'ribbon-combo': RibbonCombo, 'orb-button': OrbButton, 'scroll-bar': ScrollBar, 'tree-node': TreeNode, 'tree-view': TreeView, 'nav-button': NavButton,
  'project-panel': ProjectPanel, 'cad-canvas': CadCanvas, 'cad-status': CadStatus, 'drawing-pane': DrawingPane, 'calc-grid': CalcGrid, 'calc-pane': CalcPane,
  'status-bar': StatusBar, 'app-window': AppWindow };
Object.keys(parts).forEach(name => customElements.define(name, parts[name]));
</script>
</body>
</html>
